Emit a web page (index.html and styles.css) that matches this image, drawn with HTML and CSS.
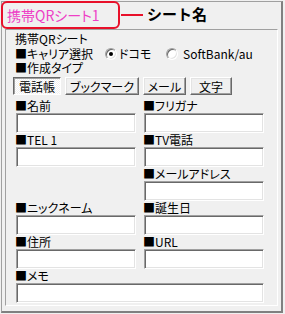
FILE: index.html
```html
<!DOCTYPE html>
<html lang="ja">
<head>
  <meta charset="UTF-8" />
  <title>携帯QRシート</title>
  <link rel="stylesheet" href="styles.css">
</head>
<body>
  <div class="window">
    <div class="header">
      <div class="sheet-tab">携帯QRシート1</div>
      <span class="callout-line"></span>
      <span class="callout-label">シート名</span>
    </div>

    <div class="panel">
      <div class="line">携帯QRシート</div>
      <div class="line carrier">
        <span class="carrier-label">■キャリア選択</span>
        <span class="radio checked"></span>
        <span class="radio-text docomo">ドコモ</span>
        <span class="radio"></span>
        <span class="radio-text softbank">SoftBank/au</span>
      </div>
      <div class="line">■作成タイプ</div>

      <div class="tabs">
        <span class="btn pressed btn-phone">電話帳</span>
        <span class="btn btn-bookmark">ブックマーク</span>
        <span class="btn btn-mail">メール</span>
        <span class="btn btn-text">文字</span>
      </div>

      <div class="fields">
        <div class="field"><div class="label">■名前</div><div class="input"></div></div>
        <div class="field"><div class="label">■フリガナ</div><div class="input"></div></div>
        <div class="field"><div class="label">■TEL 1</div><div class="input"></div></div>
        <div class="field"><div class="label">■TV電話</div><div class="input"></div></div>
        <div class="field"></div>
        <div class="field"><div class="label">■メールアドレス</div><div class="input"></div></div>
        <div class="field"><div class="label">■ニックネーム</div><div class="input"></div></div>
        <div class="field"><div class="label">■誕生日</div><div class="input"></div></div>
        <div class="field"><div class="label">■住所</div><div class="input"></div></div>
        <div class="field"><div class="label">■URL</div><div class="input"></div></div>
        <div class="field wide"><div class="label">■メモ</div><div class="input"></div></div>
      </div>
    </div>
  </div>
</body>
</html>
```

FILE: styles.css
```css
html, body {
  margin: 0;
  padding: 0;
}

body {
  background: #f0f0f0;
  font-family: "Noto Sans CJK JP", "DejaVu Sans", sans-serif;
  font-size: 12px;
  font-feature-settings: "palt";
  color: #000;
}

.window {
  box-sizing: border-box;
  width: 282px;
  height: 312px;
  margin: 1px 0 0 1px;
  border-style: solid;
  border-width: 1px 2px 2px 1px;
  border-color: #a0a0a0 #808080 #808080 #a0a0a0;
  display: flex;
  flex-direction: column;
}

/* cabecera con la anotación en rojo */
.header {
  display: flex;
  align-items: flex-start;
  height: 27px;
  flex-shrink: 0;
}

.sheet-tab {
  box-sizing: border-box;
  width: 119px;
  height: 28px;
  margin: -1px 0 0 -1px;
  padding-left: 4px;
  border: 2px solid #e8102a;
  border-radius: 6px;
  color: #ee3fc6;
  font-size: 14px;
  line-height: 24px;
  white-space: nowrap;
}

.callout-line {
  width: 22px;
  height: 2px;
  margin: 12px 0 0 1px;
  background: #e8102a;
}

.callout-label {
  margin: 2px 0 0 4px;
  font-size: 15px;
  font-weight: bold;
  line-height: 20px;
  font-feature-settings: normal;
}

.panel {
  flex: 1;
  margin: 0 3px 5px 3px;
  padding: 2px 0 0 9px;
  border: 1px solid;
  border-color: #a0a0a0 #fff #fff #a0a0a0;
}

.line {
  height: 14px;
  line-height: 14px;
  white-space: nowrap;
}

.carrier {
  display: flex;
  align-items: center;
  height: 15px;
}

.carrier-label {
  width: 90px;
}

.radio {
  position: relative;
  box-sizing: border-box;
  width: 12px;
  height: 12px;
  flex-shrink: 0;
  border-radius: 50%;
  border: 1px solid;
  border-color: #a0a0a0 #fff #fff #a0a0a0;
  box-shadow: inset 1px 1px #696969, inset -1px -1px #e3e3e3;
  background: #fff;
}

.radio.checked::after {
  content: "";
  position: absolute;
  left: 3px;
  top: 3px;
  width: 4px;
  height: 4px;
  border-radius: 50%;
  background: #000;
}

.docomo {
  width: 47px;
  margin-left: 2px;
}

.softbank {
  margin-left: 5px;
}

.tabs {
  display: flex;
  gap: 4px;
  margin: 2px 0 0 -2px;
}

.btn {
  box-sizing: border-box;
  height: 18px;
  display: flex;
  align-items: center;
  justify-content: center;
  border: 1px solid;
  border-color: #fff #696969 #696969 #fff;
  box-shadow: inset -1px -1px #a0a0a0, inset 1px 1px #e3e3e3;
  background: #f0f0f0;
  white-space: nowrap;
}

.btn.pressed {
  border-color: #696969 #fff #fff #696969;
  box-shadow: inset 1px 1px #a0a0a0;
  background: repeating-conic-gradient(#fff 0 25%, #f0f0f0 0 50%) 0 0 / 2px 2px;
}

.btn-phone { width: 48px; }
.btn-bookmark { width: 74px; }
.btn-mail { width: 43px; }
.btn-text { width: 42px; }

.fields {
  display: grid;
  grid-template-columns: 120px 120px;
  column-gap: 8px;
  margin: 4px 0 0 1px;
}

.field {
  display: flex;
  flex-direction: column;
  min-height: 34px;
}

.wide {
  grid-column: 1 / -1;
}

.label {
  height: 14px;
  line-height: 14px;
  margin-left: -1px;
  white-space: nowrap;
}

.input {
  box-sizing: border-box;
  height: 20px;
  border: 1px solid;
  border-color: #a0a0a0 #fff #fff #a0a0a0;
  box-shadow: inset 1px 1px #696969, inset -1px -1px #e3e3e3;
  background: #fff;
}
```
